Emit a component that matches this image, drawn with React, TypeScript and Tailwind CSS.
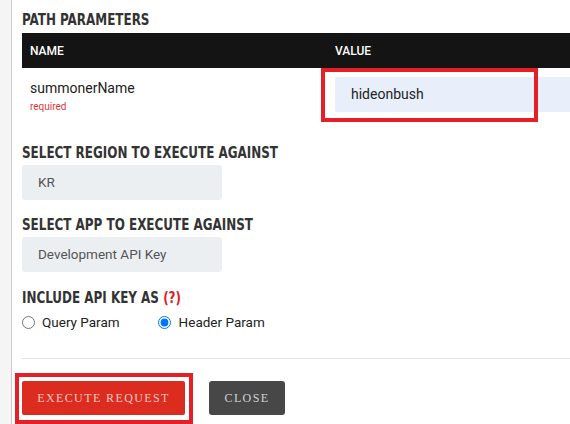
import React from "react"

// condensed bold headings, narrowed to match the reference face
const heading = "font-['Liberation_Sans_Narrow','DejaVu_Sans_Condensed',sans-serif] font-bold text-[16px] leading-[20px] h-[20px] text-[#333] uppercase origin-left scale-x-[0.83] whitespace-nowrap"

export default function App() {
  return (
    <div className="flex w-[570px] h-[424px] overflow-hidden bg-white font-['Roboto','Liberation_Sans',sans-serif]">
      {/* left rail */}
      <div className="w-[12px] shrink-0 bg-[#f5f5f5] border-r border-[#cccccc]" />

      <div className="flex-1 pl-[10px] pt-[10px] overflow-hidden">
        <div className="w-[620px]">
          <h2 className={`${heading} mb-[3px]`}>Path Parameters</h2>

          {/* params table */}
          <div className="grid grid-cols-[305px_1fr] bg-[#141414] h-[35px] items-center text-white text-[12px] font-medium">
            <div className="pl-[8px]">NAME</div>
            <div className="pl-[8px]">VALUE</div>
          </div>
          <div className="grid grid-cols-[305px_1fr] h-[54px]">
            <div className="pl-[8px] pt-[12px]">
              <div className="text-[14px] leading-[16px] text-[#222]">summonerName</div>
              <div className="text-[10px] leading-[12px] mt-[5px] text-[#d83a3a]">required</div>
            </div>
            <div className="relative pl-[8px] pt-[9px]">
              <div className="h-[35px] bg-[#e8effb] rounded-[2px] flex items-center pl-[16px] text-[14px] text-[#222]">
                hideonbush
              </div>
              <div className="absolute left-[-6px] top-0 w-[217px] h-[54px] border-4 border-[#e61e25]" />
            </div>
          </div>
        </div>

        <h2 className={`${heading} mt-[21px] mb-[2px]`}>Select Region to Execute Against</h2>
        <div className="w-[200px] h-[35px] bg-[#eceff2] rounded-[3px] flex items-center pl-[16px] text-[13.5px] text-[#555]">
          KR
        </div>

        <h2 className={`${heading} mt-[15px] mb-[2px]`}>Select App to Execute Against</h2>
        <div className="w-[200px] h-[35px] bg-[#eceff2] rounded-[3px] flex items-center pl-[16px] text-[13.5px] text-[#555]">
          Development API Key
        </div>

        <h2 className={`${heading} mt-[16px]`}>
          Include API Key as <span className="text-[#d8232a]">(?)</span>
        </h2>
        <div className="flex items-center h-[16px] mt-[6px] text-[13.5px] text-[#222]">
          <label className="flex items-center">
            <input type="radio" name="keyas" className="m-0 w-[13px] h-[13px]" readOnly />
            <span className="ml-[7px]">Query Param</span>
          </label>
          <label className="flex items-center ml-[38px]">
            <input type="radio" name="keyas" className="m-0 w-[13px] h-[13px]" defaultChecked />
            <span className="ml-[8px]">Header Param</span>
          </label>
        </div>

        <div className="h-px bg-[#e2e4e4] mt-[28px]" />

        <div className="flex mt-[22px] gap-[24px]">
          <div className="relative">
            <button className="h-[34px] w-[163px] bg-[#dc2b1f] rounded-[2px] text-[#f3c9c2] text-[12px] tracking-[1.4px] font-['Liberation_Serif',serif] uppercase">
              Execute Request
            </button>
            <div className="absolute -left-[7px] -top-[8px] w-[178px] h-[51px] border-4 border-[#e61e25]" />
          </div>
          <button className="h-[34px] w-[76px] bg-[#474747] rounded-[3px] text-[#d2d2d2] text-[12px] tracking-[1.4px] font-['Liberation_Serif',serif] uppercase">
            Close
          </button>
        </div>
      </div>
    </div>
  )
}
